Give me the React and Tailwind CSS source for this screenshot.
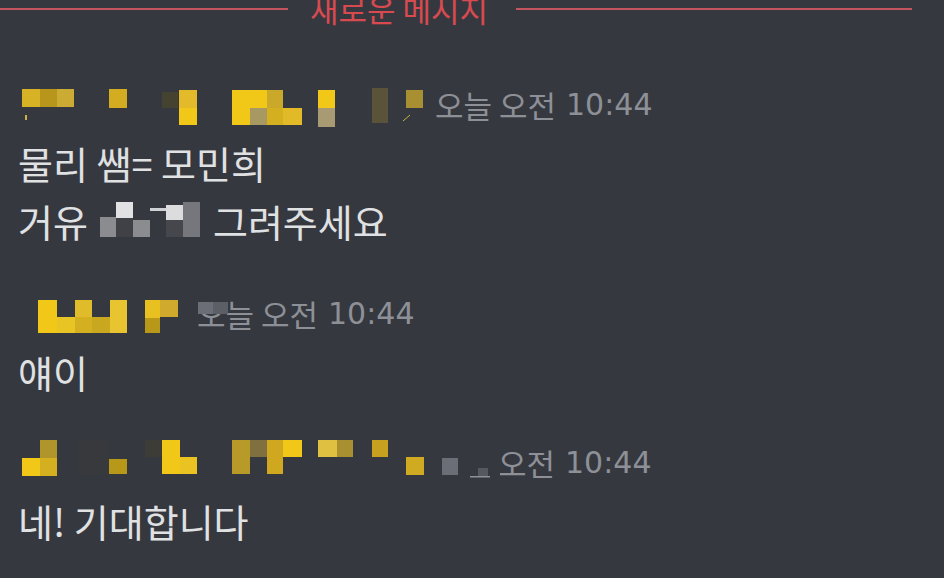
const BG = "#36383f"

// mosaic blocks over the censored usernames: [x, y, w, h, fill], y measured from the header row top
const mosaicRows = [
  {
    width: 435,
    blocks: [
      [22, 13, 18, 18, "#d6b224"],
      [40, 13, 17, 18, "#b8961c"],
      [57, 13, 17, 18, "#cbab34"],
      [25, 39, 2, 5, "#d0b040"],
      [109, 13, 18, 19, "#d4ac22"],
      [162, 16, 16, 16, "#45422f"],
      [179, 14, 18, 18, "#e2ba2a"],
      [179, 32, 18, 17, "#f2c818"],
      [232, 14, 35, 35, "#f2c818"],
      [250, 32, 17, 17, "#a89862"],
      [267, 14, 16, 18, "#c9a82a"],
      [267, 32, 16, 17, "#d4b020"],
      [283, 32, 19, 17, "#e2ba28"],
      [318, 14, 17, 18, "#f2c818"],
      [318, 32, 17, 19, "#a89a72"],
      [372, 12, 16, 35, "#5a533a"],
      [406, 14, 17, 18, "#a89032"],
    ],
    line: [403, 45, 410, 39],
  },
  {
    width: 197,
    blocks: [
      [38, 15, 19, 33, "#f2c818"],
      [57, 32, 18, 16, "#e8c424"],
      [75, 15, 17, 17, "#e0bc2a"],
      [75, 32, 17, 16, "#d4b020"],
      [92, 32, 18, 16, "#c9a820"],
      [110, 15, 17, 33, "#e8c430"],
      [145, 15, 15, 18, "#e8c020"],
      [145, 33, 15, 15, "#b89818"],
      [160, 15, 18, 17, "#d0aa2c"],
      [198, 17, 15, 12, "#6b6e76"],
      [213, 17, 15, 12, "#5c5f66"],
    ],
  },
  {
    width: 434,
    blocks: [
      [22, 24, 18, 18, "#f2c818"],
      [40, 6, 17, 18, "#b0962a"],
      [40, 24, 17, 18, "#d4b020"],
      [77, 6, 32, 35, "#38393d"],
      [109, 25, 18, 15, "#b89818"],
      [145, 6, 17, 17, "#3d3c37"],
      [162, 6, 18, 34, "#f2c818"],
      [180, 23, 17, 17, "#eac222"],
      [232, 6, 18, 34, "#b89a28"],
      [250, 6, 17, 17, "#807040"],
      [267, 6, 16, 34, "#d0a820"],
      [283, 6, 19, 17, "#f2c818"],
      [318, 6, 19, 17, "#e0c040"],
      [337, 6, 16, 17, "#a89030"],
      [372, 6, 16, 17, "#c8a020"],
      [406, 23, 18, 18, "#d0aa20"],
      [434, 4, 66, 50, BG],
      [442, 24, 16, 17, "#6b6e76"],
      [478, 34, 10, 8, "#55585f"],
      [470, 42, 20, 1.5, "#8d9096"],
    ],
  },
]

const messages = [
  { top: "mt-[58px]", lines: [["물리 쌤= 모민희"], ["거유", "그려주세요"]] },
  { top: "mt-[35px]", lines: [["얘이"]] },
  { top: "mt-[33px]", lines: [["네! 기대합니다"]] },
]

const Mosaic = ({ row }) => (
  <svg width={row.width} height="58" className="shrink-0 overflow-visible relative z-10">
    {row.blocks.map(([x, y, w, h, fill], i) => (
      <rect key={i} x={x} y={y} width={w} height={h} fill={fill} />
    ))}
    {row.line && (
      <line x1={row.line[0]} y1={row.line[1]} x2={row.line[2]} y2={row.line[3]} stroke="#c8b040" strokeWidth="1" />
    )}
  </svg>
)

// blurred-out word inside the second message line
const Censored = () => (
  <svg width="100" height="38" className="shrink-0 ml-[12px] mr-[13px]">
    <rect x="0" y="15" width="16" height="20" fill="#8a8c90" />
    <rect x="16" y="0" width="17" height="16" fill="#e2e2e4" />
    <rect x="16" y="16" width="17" height="19" fill="#3f4147" />
    <rect x="33" y="18" width="17" height="17" fill="#8a8c90" />
    <rect x="50" y="6" width="16" height="3" fill="#d0d1d4" />
    <rect x="66" y="3" width="17" height="15" fill="#dcdcde" />
    <rect x="66" y="18" width="17" height="17" fill="#45474d" />
    <rect x="83" y="0" width="17" height="35" fill="#75777d" />
  </svg>
)

const App = () => {
  return (
    <div
      className="w-[944px] h-[578px] overflow-hidden bg-[#36383f]"
      style={{ fontFamily: '"Noto Sans CJK KR", "Noto Sans", sans-serif' }}
    >
      {/* new messages divider */}
      <div className="flex items-center h-[18px] pr-[32px]">
        <div className="w-[288px] h-[2px] bg-[#c4545e]" />
        <span className="pl-[22px] pr-[28px] text-[31px] leading-[30px] text-[#d84a50]">새로운 메시지</span>
        <div className="flex-1 h-[2px] bg-[#c4545e]" />
      </div>

      {messages.map((msg, i) => (
        <div key={i} className={msg.top}>
          <div className="flex items-center h-[58px] whitespace-nowrap text-[#8d9096]">
            <Mosaic row={mosaicRows[i]} />
            <span className="text-[31px] leading-[58px]">오늘 오전</span>
            <span
              className="ml-[10px] text-[30px] leading-[58px]"
              style={{ fontFamily: '"DejaVu Sans", sans-serif' }}
            >
              10:44
            </span>
          </div>
          {msg.lines.map((parts, j) => (
            <div key={j} className="flex items-center h-[58px] pl-[18px] text-[38px] leading-[58px] text-[#e0e1e3] whitespace-nowrap">
              <span>{parts[0]}</span>
              {parts.length > 1 && (
                <>
                  <Censored />
                  <span>{parts[1]}</span>
                </>
              )}
            </div>
          ))}
        </div>
      ))}
    </div>
  )
}

export default App
